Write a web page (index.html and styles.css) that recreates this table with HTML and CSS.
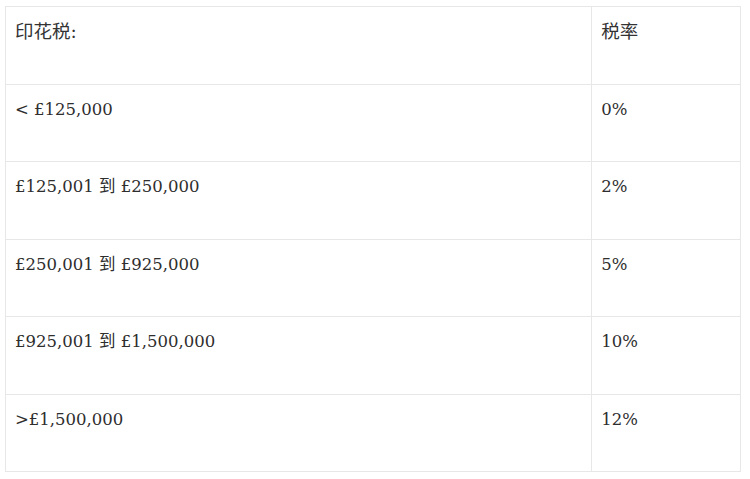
FILE: index.html
```html
<!DOCTYPE html>
<html lang="zh">
<head>
<meta charset="utf-8">
<link rel="stylesheet" href="styles.css">
</head>
<body>
<div class="wrap">
<table class="tax">
  <tr class="head"><td class="band">印花税:</td><td class="rate">税率</td></tr>
  <tr><td class="band">&lt; £125,000</td><td class="rate">0%</td></tr>
  <tr><td class="band">£125,001 到 £250,000</td><td class="rate">2%</td></tr>
  <tr><td class="band">£250,001 到 £925,000</td><td class="rate">5%</td></tr>
  <tr><td class="band">£925,001 到 £1,500,000</td><td class="rate">10%</td></tr>
  <tr><td class="band">&gt;£1,500,000</td><td class="rate">12%</td></tr>
</table>
</div>
</body>
</html>
```

FILE: styles.css
```css
html, body {
  margin: 0;
  padding: 0;
  background: #ffffff;
}
.wrap {
  padding: 6px 0 0 5px;
}
.tax {
  border-collapse: collapse;
  width: 736px;
  font-family: "DejaVu Serif", "Noto Sans CJK SC", serif;
  font-size: 16.5px;
  line-height: 26px;
  color: #2e2e2e;
}
.tax td {
  border: 1px solid #e7e7e7;
  padding: 12px 9px;
  vertical-align: top;
  height: 52.5px;
}
.tax .head td {
  font-size: 18.5px;
  color: #333333;
}
.tax td.band {
  width: 568px;
}
.tax td.rate {
  width: 130px;
}
```
